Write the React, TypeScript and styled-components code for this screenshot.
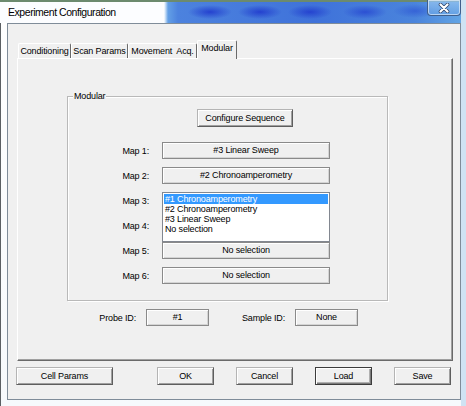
import React from 'react'
import styled, { createGlobalStyle, css } from 'styled-components'

const GlobalStyle = createGlobalStyle`
  html, body {
    margin: 0;
    padding: 0;
    background: #ffffff;
  }
  body {
    font-family: "Liberation Sans", Arial, sans-serif;
    font-size: 9px;
    letter-spacing: -0.15px;
    color: #000;
  }
`

const Window = styled.div`
  width: 466px;
  height: 406px;
  overflow: hidden;
  background:
    linear-gradient(90deg, #5b5f63 0, #5b5f63 1px, transparent 1px),
    linear-gradient(180deg, #ffffff 0, #f6f9fc 100%);
  box-sizing: border-box;
  border-right: 5px solid #cfe3f3;
`

const TitleBar = styled.div`
  position: relative;
  height: 23px;
  box-sizing: border-box;
  border-top: 2px solid #6c8a6e;
  padding: 3px 0 0 8px;
  background-color: #3d6fd9;
  background-image:
    linear-gradient(90deg, #fcfdff 0, #fcfdff 164px, rgba(252, 253, 255, 0) 168px),
    radial-gradient(ellipse 22px 7px at 210px 10px, rgba(30, 55, 205, 0.85), rgba(30, 55, 205, 0)),
    radial-gradient(ellipse 22px 7px at 260px 10px, rgba(30, 55, 205, 0.85), rgba(30, 55, 205, 0)),
    radial-gradient(ellipse 22px 7px at 310px 10px, rgba(30, 55, 205, 0.8), rgba(30, 55, 205, 0)),
    radial-gradient(ellipse 22px 7px at 365px 10px, rgba(35, 65, 208, 0.75), rgba(35, 65, 208, 0)),
    radial-gradient(ellipse 22px 7px at 415px 9px, rgba(45, 85, 212, 0.7), rgba(45, 85, 212, 0)),
    linear-gradient(90deg, #6aa8e8 165px, #4c82de 178px, #3f72da 315px, #4a84dc 415px, #62a4e4 461px);
`

const Title = styled.span`
  display: block;
  font-size: 10.5px;
  letter-spacing: -0.45px;
  line-height: 14px;
  color: #000;
  white-space: nowrap;
`

const CloseButton = styled.div`
  position: absolute;
  top: -2px;
  right: 0;
  width: 34px;
  height: 16px;
  box-sizing: border-box;
  border: 1px solid #3f5f8c;
  border-top: none;
  border-radius: 0 0 4px 4px;
  background: linear-gradient(180deg, rgba(150, 195, 240, 0.8), rgba(100, 160, 228, 0.8));
  box-shadow: inset 0 0 0 1px rgba(255, 255, 255, 0.55);
  display: flex;
  align-items: center;
  justify-content: center;
`

const Client = styled.div`
  margin-left: 7px;
  width: 454px;
  height: 377px;
  box-sizing: border-box;
  background: #f0f0f0;
  border: 1px solid #7f8c99;
  padding: 16px 0 0 10px;
  display: flex;
  flex-direction: column;
`

const TabStrip = styled.div`
  display: flex;
  align-items: flex-end;
  height: 18px;
  position: relative;
  z-index: 1;
`

const Tab = styled.div<{ $active?: boolean; $w: number }>`
  width: ${({ $w }) => $w}px;
  box-sizing: border-box;
  height: ${({ $active }) => ($active ? 19 : 15)}px;
  border-left: 1px solid #ffffff;
  border-top: 1px solid #ffffff;
  border-right: 1px solid #6a6a6a;
  border-radius: 2px 2px 0 0;
  background: #f0f0f0;
  white-space: pre;
  text-align: center;
  line-height: 13px;
  padding-top: 1px;
  ${({ $active }) =>
    $active &&
    css`
      margin-bottom: -1px;
    `}
`

const Panel = styled.div`
  width: 436px;
  height: 303px;
  box-sizing: border-box;
  border-top: 1px solid #ffffff;
  border-left: 1px solid #ffffff;
  border-right: 1px solid #6a6a6a;
  border-bottom: 1px solid #6a6a6a;
  box-shadow: inset -1px -1px 0 #a0a0a0;
  margin-left: -1px;
  padding: 37px 0 0 49px;
  display: flex;
  flex-direction: column;
`

const GroupBox = styled.div`
  position: relative;
  width: 321px;
  height: 205px;
  box-sizing: border-box;
  border: 1px solid #b9b9b9;
  box-shadow: inset 1px 1px 0 #ffffff, 1px 1px 0 #ffffff;
  padding: 12px 0 0 0;
  display: flex;
  flex-direction: column;
`

const Legend = styled.span`
  position: absolute;
  top: -6px;
  left: 5px;
  padding: 0 1px;
  background: #f0f0f0;
  line-height: 11px;
`

const Button = styled.div<{ $w: number; $default?: boolean }>`
  width: ${({ $w }) => $w}px;
  height: 18px;
  box-sizing: border-box;
  background: #f0f0f0;
  border-top: 1px solid #b4b4b4;
  border-left: 1px solid #b4b4b4;
  border-right: 1px solid #5e5e5e;
  border-bottom: 1px solid #5e5e5e;
  box-shadow: inset 1px 1px 0 #ffffff, inset -1px -1px 0 #a0a0a0;
  display: flex;
  align-items: center;
  justify-content: center;
  line-height: 12px;
  flex: none;
  ${({ $default }) =>
    $default &&
    css`
      border: 1px solid #3c3c3c;
      box-shadow: inset 1px 1px 0 #ffffff, inset -1px -1px 0 #7a7a7a, inset -2px -2px 0 #b0b0b0;
    `}
`

const ConfigRow = styled.div`
  display: flex;
  padding-left: 129px;
  margin-bottom: 15px;
`

const MapGrid = styled.div`
  display: grid;
  grid-template-columns: 81px 168px;
  column-gap: 13px;
  row-gap: 8px;
  grid-auto-rows: 17px;
`

const MapLabel = styled.div<{ $row: number }>`
  grid-column: 1;
  grid-row: ${({ $row }) => $row};
  text-align: right;
  align-self: center;
  line-height: 12px;
`

const FieldBox = styled.div<{ $w?: number; $row?: number }>`
  ${({ $row }) =>
    $row &&
    css`
      grid-column: 2;
      grid-row: ${$row};
    `}
  width: ${({ $w }) => ($w ? `${$w}px` : 'auto')};
  flex: none;
  height: 17px;
  box-sizing: border-box;
  border: 1px solid #8a8a8a;
  box-shadow: inset 1px 1px 0 #ffffff, inset -1px -1px 0 #d4d4d4;
  background: #f0f0f0;
  text-align: center;
  line-height: 15px;
`

const ListBox = styled.div<{ $row: number }>`
  grid-column: 2;
  grid-row: ${({ $row }) => $row} / span 2;
  align-self: start;
  height: 50px;
  box-sizing: border-box;
  background: #ffffff;
  border: 1px solid #828790;
  padding: 1px;
  position: relative;
  z-index: 2;
`

const ListItem = styled.div<{ $selected?: boolean }>`
  height: 10px;
  line-height: 10px;
  padding-left: 1px;
  white-space: nowrap;
  ${({ $selected }) =>
    $selected &&
    css`
      background: #3399ff;
      color: #ffffff;
    `}
`

const IdRow = styled.div`
  display: flex;
  align-items: center;
  margin-top: 8px;
  padding-left: 29px;
`

const IdLabel = styled.span<{ $w: number; $lead: number }>`
  width: ${({ $w }) => $w}px;
  margin-left: ${({ $lead }) => $lead}px;
  margin-right: 10px;
  text-align: right;
  line-height: 12px;
  flex: none;
`

const ButtonRow = styled.div`
  display: flex;
  gap: 22px;
  margin-top: 6px;
  margin-left: -2px;
`

const Spacer = styled.div`
  width: 0;
  flex: none;
`

const maps = [
  { label: 'Map 1:', value: '#3 Linear Sweep' },
  { label: 'Map 2:', value: '#2 Chronoamperometry' },
  { label: 'Map 3:', value: '#1 Chronoamperometry', open: true },
  { label: 'Map 4:', value: 'No selection', hidden: true },
  { label: 'Map 5:', value: 'No selection' },
  { label: 'Map 6:', value: 'No selection' },
]

const options = ['#1 Chronoamperometry', '#2 Chronoamperometry', '#3 Linear Sweep', 'No selection']

const CloseIcon = () => (
  <svg width="12" height="10" viewBox="0 0 12 10">
    <path d="M2.5 1.5 L9.5 8.5 M9.5 1.5 L2.5 8.5" stroke="#2a3f66" strokeWidth="3.6" strokeLinecap="round" />
    <path d="M2.5 1.5 L9.5 8.5 M9.5 1.5 L2.5 8.5" stroke="#ffffff" strokeWidth="2.2" strokeLinecap="round" />
  </svg>
)

export default function App() {
  return (
    <>
      <GlobalStyle />
      <Window>
        <TitleBar>
          <Title>Experiment Configuration</Title>
          <CloseButton>
            <CloseIcon />
          </CloseButton>
        </TitleBar>
        <Client>
          <TabStrip>
            <Tab $w={53}>Conditioning</Tab>
            <Tab $w={57}>Scan Params</Tab>
            <Tab $w={69}>Movement  Acq.</Tab>
            <Tab $w={40} $active>
              Modular
            </Tab>
          </TabStrip>
          <Panel>
            <GroupBox>
              <Legend>Modular</Legend>
              <ConfigRow>
                <Button $w={96}>Configure Sequence</Button>
              </ConfigRow>
              <MapGrid>
                {maps.map((m, i) => (
                  <React.Fragment key={m.label}>
                    <MapLabel $row={i + 1}>{m.label}</MapLabel>
                    {m.open ? (
                      <ListBox $row={i + 1}>
                        {options.map((o) => (
                          <ListItem key={o} $selected={o === m.value}>
                            {o}
                          </ListItem>
                        ))}
                      </ListBox>
                    ) : (
                      !m.hidden && <FieldBox $row={i + 1}>{m.value}</FieldBox>
                    )}
                  </React.Fragment>
                ))}
              </MapGrid>
            </GroupBox>
            <IdRow>
              <IdLabel $w={40} $lead={0}>Probe ID:</IdLabel>
              <FieldBox $w={63}>#1</FieldBox>
              <IdLabel $w={44} $lead={32}>Sample ID:</IdLabel>
              <FieldBox $w={63}>None</FieldBox>
            </IdRow>
          </Panel>
          <ButtonRow>
            <Button $w={97}>Cell Params</Button>
            <Spacer />
            <Button $w={57}>OK</Button>
            <Button $w={57}>Cancel</Button>
            <Button $w={57} $default>
              Load
            </Button>
            <Button $w={57}>Save</Button>
          </ButtonRow>
        </Client>
      </Window>
    </>
  )
}
